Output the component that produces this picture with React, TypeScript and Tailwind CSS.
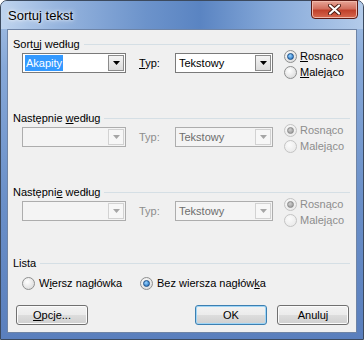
import React from 'react';

const font = { fontFamily: '"Liberation Sans", Arial, sans-serif' };

function Radio({ checked, disabled }: { checked?: boolean; disabled?: boolean }) {
  return (
    <span
      className={`flex h-[13px] w-[13px] shrink-0 items-center justify-center rounded-full border ${
        disabled
          ? 'border-[#c4c4c4] bg-[radial-gradient(circle_at_40%_35%,#fbfbfb,#e6e6e6)]'
          : 'border-[#8e8f8f] bg-[radial-gradient(circle_at_40%_35%,#ffffff,#d4d4d4)]'
      }`}
    >
      {checked && (
        <span
          className={`h-[7px] w-[7px] rounded-full border ${
            disabled
              ? 'border-[#8a8a8a] bg-[radial-gradient(circle_at_40%_35%,#d0d0d0,#8f8f8f)]'
              : 'border-[#1b4e86] bg-[radial-gradient(circle_at_40%_35%,#9ad4ff,#0f62b8)]'
          }`}
        />
      )}
    </span>
  );
}

function Arrow({ disabled }: { disabled?: boolean }) {
  return (
    <svg width="7" height="4" viewBox="0 0 7 4">
      <path d="M0 0h7L3.5 4z" fill={disabled ? '#a6a6a6' : '#000'} />
    </svg>
  );
}

function Combo({ width, value, selected, disabled }: { width: string; value?: string; selected?: boolean; disabled?: boolean }) {
  return (
    <div
      className={`flex h-[20px] shrink-0 items-stretch border p-px ${width} ${
        disabled ? 'border-[#adadad] bg-[#f4f4f4]' : 'border-[#7a7a7a] bg-white'
      }`}
    >
      <div className="flex flex-1 items-center pl-[1px]">
        {value && (
          <span
            className={`px-[1px] leading-[16px] ${
              selected ? 'bg-[#3399ff] text-white' : disabled ? 'text-[#6d6d6d]' : 'text-black'
            }`}
          >
            {value}
          </span>
        )}
      </div>
      <div
        className={`flex w-[16px] items-center justify-center border ${
          disabled
            ? 'border-[#d2d2d2] bg-[#f7f7f7]'
            : 'border-[#8b8b8b] bg-[linear-gradient(#f4f4f4,#dcdcdc)]'
        }`}
      >
        <Arrow disabled={disabled} />
      </div>
    </div>
  );
}

function Header({ children }: { children: React.ReactNode }) {
  return (
    <div className="flex h-[14px] items-center pl-[5px] pr-[6px]">
      <span className="whitespace-nowrap text-black">{children}</span>
      <div className="ml-[4px] h-px flex-1 bg-[#d5dfe5]" />
    </div>
  );
}

function SortSection({ label, first, last }: { label: React.ReactNode; first?: boolean; last?: boolean }) {
  const dis = !first;
  return (
    <div className={last ? 'h-[71px]' : 'h-[74px]'}>
      <Header>{label}</Header>
      <div className="mt-[2px] flex pl-[14px]">
        <Combo width="w-[104px]" value={first ? 'Akapity' : undefined} selected={first} disabled={dis} />
        <span className={`ml-[13px] w-[36px] leading-[20px] ${dis ? 'text-[#8d8d8d]' : 'text-black'}`}>
          {first ? (
            <>
              <span className="underline">T</span>yp:
            </>
          ) : (
            'Typ:'
          )}
        </span>
        <Combo width="w-[98px]" value="Tekstowy" disabled={dis} />
        <div className="-mt-[5px] ml-[11px] flex flex-col">
          <div className="flex h-[16px] items-center gap-[3px]">
            <Radio checked disabled={dis} />
            <span className={dis ? 'text-[#8d8d8d]' : 'text-black'}>
              {first ? (
                <>
                  <span className="underline">R</span>osnąco
                </>
              ) : (
                'Rosnąco'
              )}
            </span>
          </div>
          <div className="flex h-[16px] items-center gap-[3px]">
            <Radio disabled={dis} />
            <span className={dis ? 'text-[#8d8d8d]' : 'text-black'}>
              {first ? (
                <>
                  <span className="underline">M</span>alejąco
                </>
              ) : (
                'Malejąco'
              )}
            </span>
          </div>
        </div>
      </div>
    </div>
  );
}

function Button({ children, primary }: { children: React.ReactNode; primary?: boolean }) {
  return (
    <button
      className={`h-[20px] w-[72px] rounded-[3px] border bg-[linear-gradient(#f2f2f2_0%,#ebebeb_50%,#dddddd_50%,#cfcfcf_100%)] text-[11px] text-black ${
        primary ? 'border-[#3c7fb1] shadow-[inset_0_0_0_1px_#9fd5f6]' : 'border-[#707070] shadow-[inset_0_0_0_1px_#fbfbfb]'
      }`}
    >
      {children}
    </button>
  );
}

export default function App() {
  return (
    <div
      style={font}
      className="flex h-[340px] w-[364px] flex-col rounded-t-[7px] border border-[#3c4a5e] bg-[linear-gradient(180deg,#a6c1e4_0%,#86a8d8_20%,#6a8fc8_60%,#5a7fbd_100%)] text-[11px]"
    >
      <div className="flex h-[28px] shrink-0 justify-between rounded-t-[6px] bg-[linear-gradient(90deg,#bfd4ee_0%,#98b6df_15%,#6c93cb_40%,#5a84c2_55%,#86a9d9_75%,#b3cbea_100%)] pl-[7px] pr-[5px]">
        <span className="pt-[7px] text-[13px] leading-[15px] text-black [text-shadow:0_0_6px_#ffffff,0_0_3px_#ffffff]">
          Sortuj tekst
        </span>
        <div className="flex h-[19px] w-[47px] -mt-px items-center justify-center rounded-b-[4px] border border-[#5c1a14] bg-[linear-gradient(#e8a597_0%,#d2705f_45%,#c0412c_55%,#d7684f_100%)] shadow-[inset_0_0_0_1px_#f0b8aa]">
          <svg width="13" height="11" viewBox="0 0 13 11">
            <path d="M2 1.5L11 9.5M11 1.5L2 9.5" stroke="#4a1a12" strokeWidth="4" strokeLinecap="round" />
            <path d="M2 1.5L11 9.5M11 1.5L2 9.5" stroke="#ffffff" strokeWidth="2.2" strokeLinecap="round" />
          </svg>
        </div>
      </div>
      <div className="mx-[6px] mb-[6px] flex flex-1 flex-col border border-[#6e84a6] bg-[#f0f0f0] pt-[7px]">
        <SortSection
          first
          label={
            <>
              Sort<span className="underline">u</span>j według
            </>
          }
        />
        <SortSection
          label={
            <>
              Następnie <span className="underline">w</span>edług
            </>
          }
        />
        <SortSection
          last
          label={
            <>
              Następni<span className="underline">e</span> według
            </>
          }
        />
        <Header>Lista</Header>
        <div className="mt-[5px] flex h-[16px] items-center pl-[14px]">
          <div className="flex w-[118px] items-center gap-[4px]">
            <Radio />
            <span>
              W<span className="underline">i</span>ersz nagłówka
            </span>
          </div>
          <div className="flex items-center gap-[4px]">
            <Radio checked />
            <span>
              Bez wiersza nagłów<span className="underline">k</span>a
            </span>
          </div>
        </div>
        <div className="mt-[14px] flex pl-[8px] pr-[7px]">
          <Button>
            <span className="underline">O</span>pcje...
          </Button>
          <div className="ml-auto flex gap-[10px]">
            <Button primary>OK</Button>
            <Button>Anuluj</Button>
          </div>
        </div>
      </div>
    </div>
  );
}
